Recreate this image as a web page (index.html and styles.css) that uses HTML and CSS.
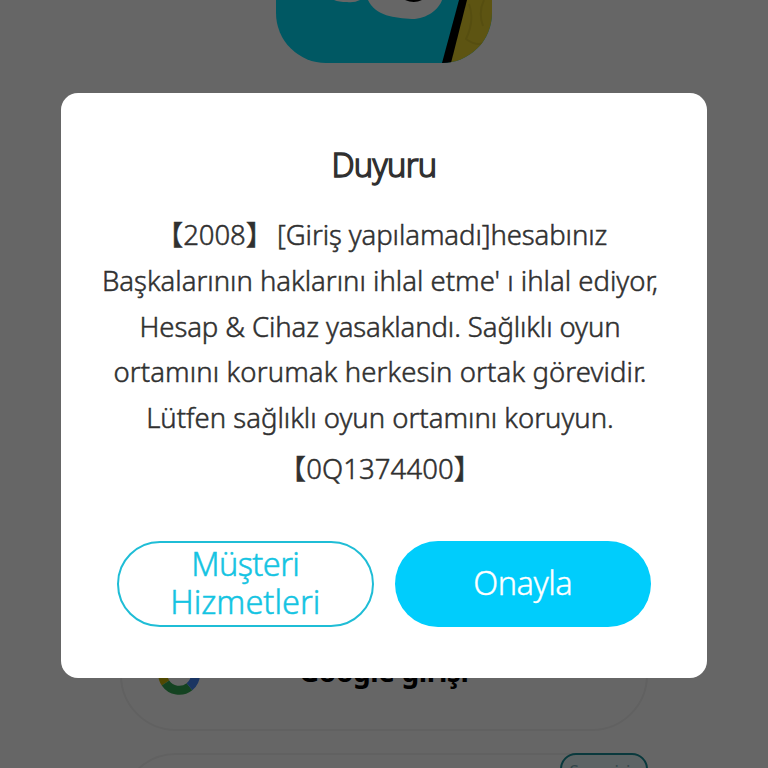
FILE: index.html
```html
<!DOCTYPE html>
<html lang="tr">
<head>
<meta charset="utf-8">
<title>Duyuru</title>
<link rel="stylesheet" href="styles.css">
</head>
<body>
<main class="page">
  <svg class="logo" width="216" height="63" viewBox="0 0 216 63">
    <defs><clipPath id="tile"><rect x="0" y="-153" width="216" height="216" rx="50"/></clipPath></defs>
    <g clip-path="url(#tile)">
      <rect width="216" height="63" fill="#00ddf8"/>
      <path d="M58 0H84Q78 3 71 2Q63 2 58 0Z" fill="#fff"/>
      <path d="M92 0H166C163 9 151 19 136 19C119 18 99 16 92 0Z" fill="#fff"/>
      <path d="M129 0H146Q138 4 129 0Z" fill="#000"/>
      <path d="M190 0H216V63H173Z" fill="#e8d22e"/>
      <path d="M193 4Q199 20 190 39Q202 48 213 41M208 0Q202 12 207 26" fill="none" stroke="#d8c228" stroke-width="2"/>
      <path d="M183 0H191L175 63H166Z" fill="#000"/>
    </g>
  </svg>
  <div class="login google">
    <svg class="ring" width="42" height="42" viewBox="0 0 42 42" fill="none" stroke-width="9">
      <path d="M33 9A16.5 16.5 0 0 0 7 12" stroke="#ea4335"/>
      <path d="M7 12A16.5 16.5 0 0 0 7.500 30" stroke="#c9b405"/>
      <path d="M7.500 30A16.500 16.500 0 0 0 31.500 33.700" stroke="#34a853"/>
      <path d="M31.500 33.700A16.500 16.500 0 0 0 37.500 21" stroke="#4285f4"/>
      <path d="M42 20H21" stroke="#4285f4" stroke-width="7"/>
    </svg>
    <span class="login-label">Google girişi</span>
  </div>
  <div class="login other"><span class="badge">Son giriş</span></div>
</main>
<div class="overlay">
  <section class="modal">
    <h1 class="title">Duyuru</h1>
    <div class="message">
      <p class="line l1"><span class="code">【2008】</span>[Giriş yapılamadı]hesabınız</p>
      <p class="line l2">Başkalarının haklarını ihlal etme' ı ihlal ediyor,</p>
      <p class="line l3">Hesap &amp; Cihaz yasaklandı. Sağlıklı oyun</p>
      <p class="line l4">ortamını korumak herkesin ortak görevidir.</p>
      <p class="line l5">Lütfen sağlıklı oyun ortamını koruyun.</p>
      <p class="line l6">【0Q1374400】</p>
    </div>
    <div class="actions">
      <button class="btn outline"><span class="w1">Müşteri</span><span class="w2">Hizmetleri</span></button>
      <button class="btn solid"><span>Onayla</span></button>
    </div>
  </section>
</div>
</body>
</html>
```

FILE: styles.css
```css
* { box-sizing: border-box; }
body {
  margin: 0;
  width: 768px;
  height: 768px;
  overflow: hidden;
  background: #fff;
  font-family: "Noto Sans", "Noto Sans CJK SC", sans-serif;
}
.page {
  display: flex;
  flex-direction: column;
  align-items: center;
  height: 768px;
  overflow: hidden;
}
.logo { display: block; flex: none; }
.login {
  position: relative;
  flex: none;
  width: 528px;
  height: 112px;
  border: 2px solid #f2f2f2;
  border-radius: 56px;
}
.google {
  display: flex;
  align-items: center;
  margin-top: 556px;
  padding: 0 0 3px 36px;
}
.ring { flex: none; }
.login-label {
  margin-left: 99px;
  padding-bottom: 5px;
  font-size: 28px;
  font-weight: 700;
  line-height: 40px;
  letter-spacing: -0.4px;
  white-space: nowrap;
  color: #000;
}
.other { margin-top: 22px; }
.badge {
  position: absolute;
  top: -2px;
  right: -2px;
  width: 88px;
  height: 36px;
  border: 2px solid #189098;
  border-radius: 16px;
  background: #e8fafc;
  color: #80b0b8;
  font-size: 17px;
  line-height: 32px;
  text-align: center;
}
.overlay {
  position: absolute;
  inset: 0;
  padding: 93px 61px 90px;
  background: rgba(0, 0, 0, 0.6);
}
.modal {
  height: 585px;
  padding-top: 48px;
  border-radius: 17px;
  background: #fff;
  color: #303030;
}
.title {
  margin: 0;
  font-size: 32.5px;
  font-weight: 300;
  line-height: 48px;
  letter-spacing: -0.7px;
  text-align: center;
  -webkit-text-stroke: 1.4px #303030;
}
.message {
  margin-top: 23px;
  padding-right: 8px;
  font-size: 27.5px;
  font-weight: 300;
  -webkit-text-stroke: 0.5px #303030;
}
.line {
  margin: 0;
  height: 45.8px;
  line-height: 45.8px;
  text-align: center;
  white-space: nowrap;
}
.l1 { padding-left: 3px; letter-spacing: -0.1px; }
.code { margin-right: 4px; }
.l3 { letter-spacing: -0.1px; }
.l4 { letter-spacing: 0.12px; }
.l6 { margin-top: 5px; letter-spacing: 0.1px; }
.actions {
  display: flex;
  gap: 21px;
  margin-top: 49px;
  padding-left: 56px;
}
.btn {
  display: flex;
  flex-direction: column;
  align-items: center;
  justify-content: center;
  width: 256.5px;
  height: 86px;
  padding: 0 0 1px;
  border: 0;
  border-radius: 43px;
  font-family: inherit;
  font-size: 32.5px;
  font-weight: 300;
  line-height: 38px;
}
.outline {
  border: 2px solid #1fbdd6;
  background: #fff;
  color: #14c4e2;
  -webkit-text-stroke: 0.5px #14c4e2;
}
.w1 { letter-spacing: -0.6px; }
.solid {
  background: #00cdfc;
  color: #fff;
  letter-spacing: -0.5px;
  -webkit-text-stroke: 0.4px #fff;
}
```
